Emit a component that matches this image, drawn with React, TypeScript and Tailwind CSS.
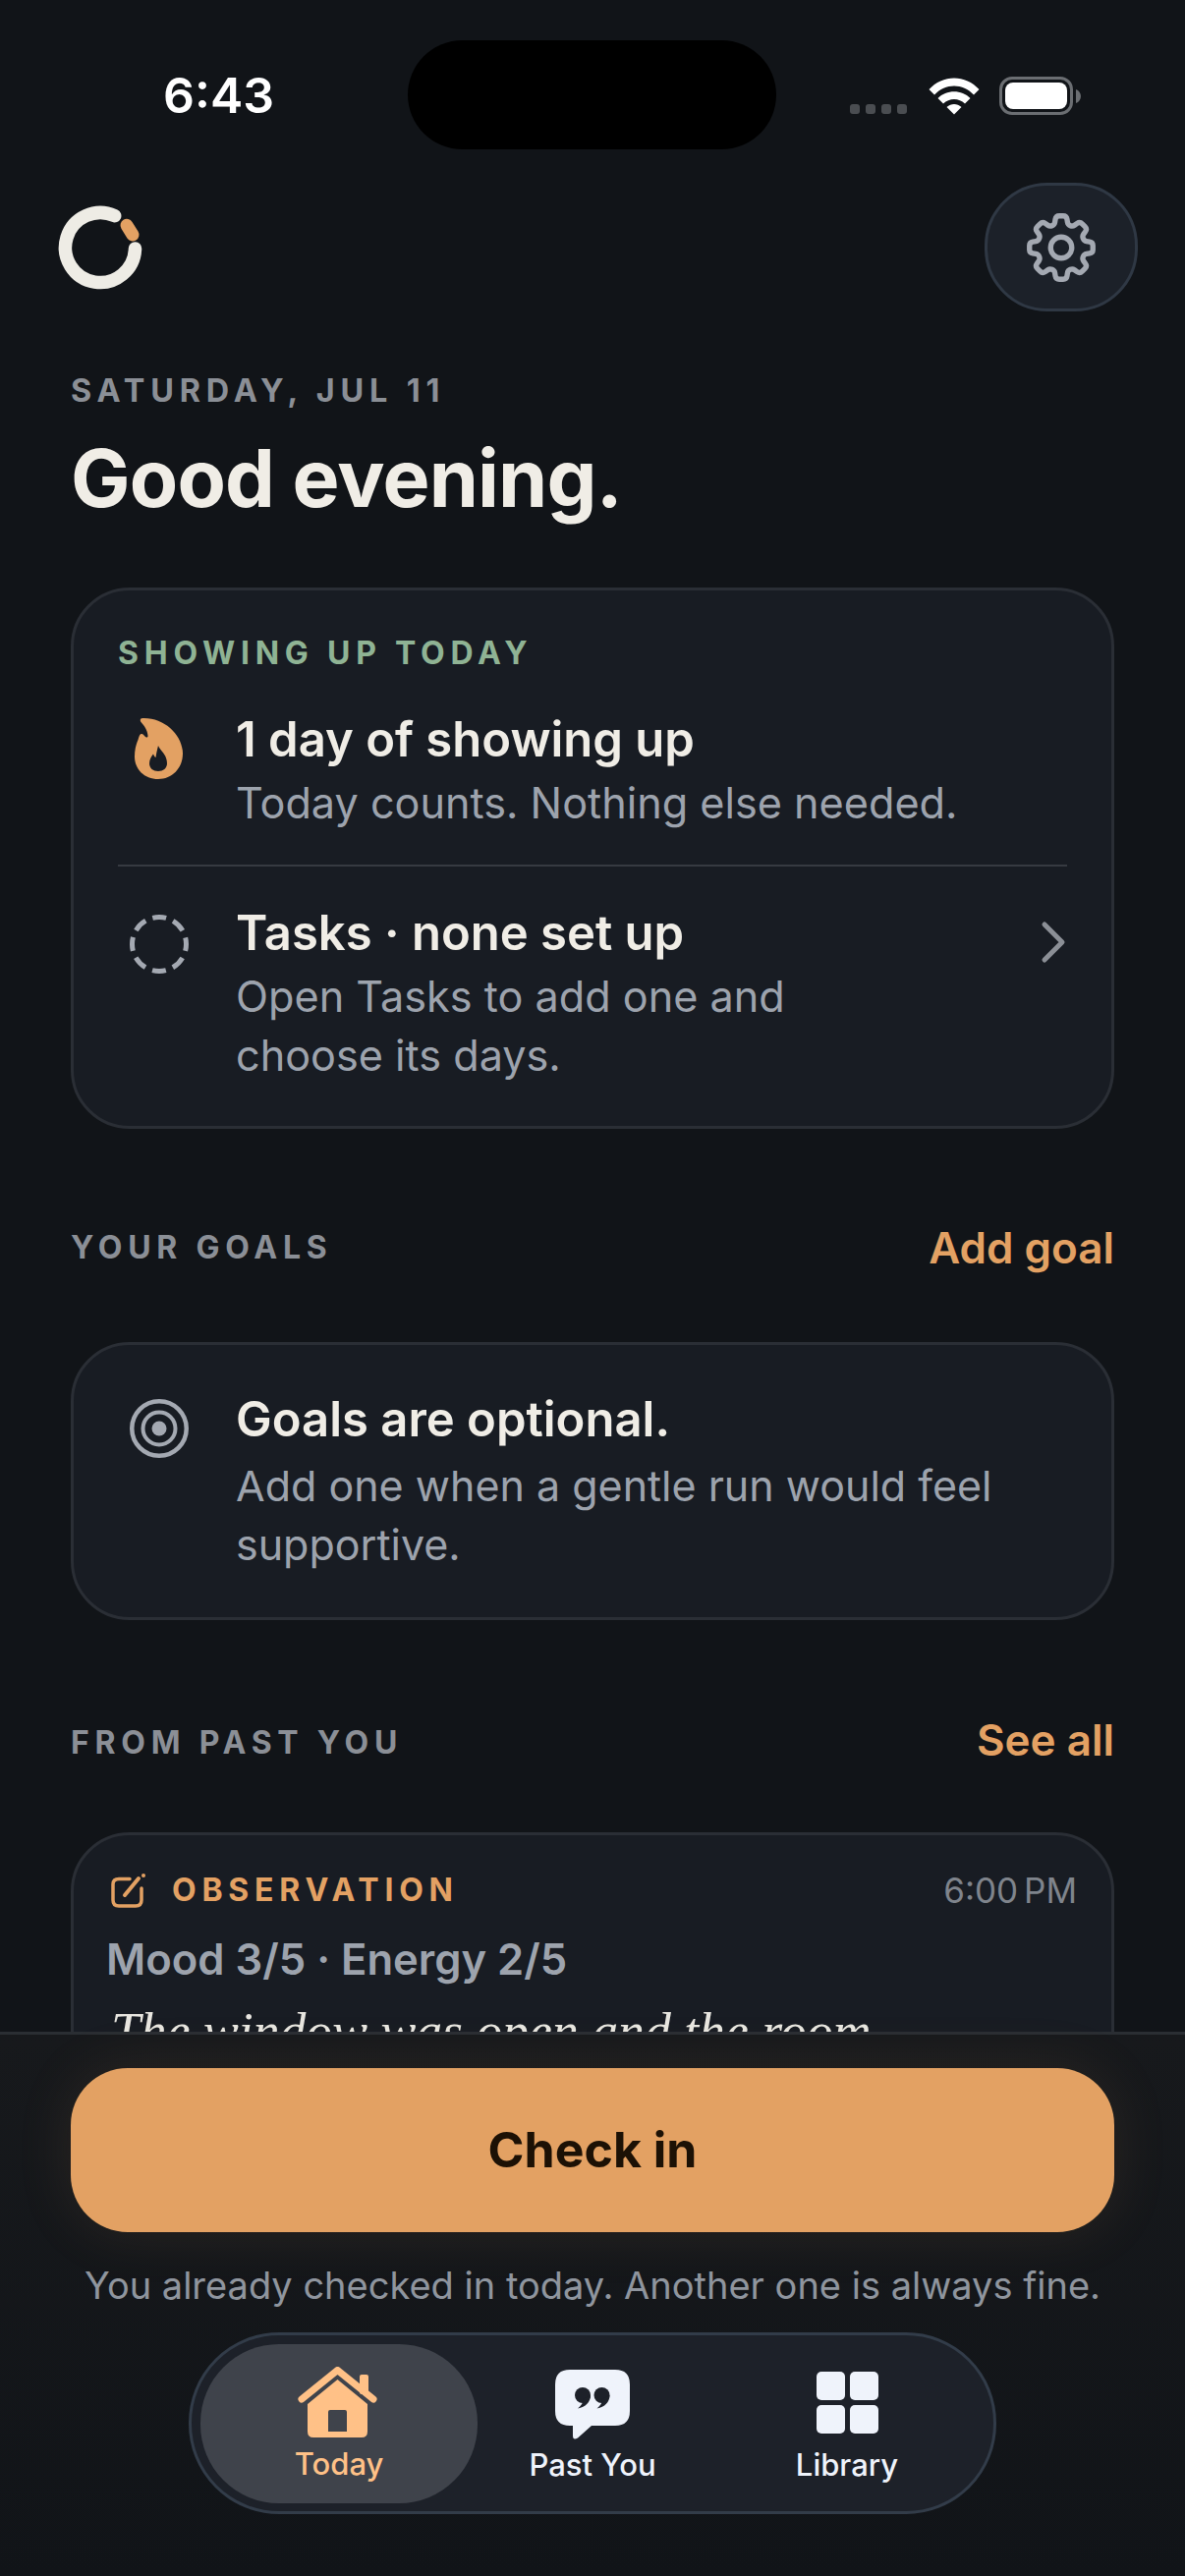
import React from "react";
import { HiOutlineCog8Tooth } from "react-icons/hi2";

const Sans = "font-['Inter','Liberation_Sans',sans-serif]";

function Logo() {
  return (
    <svg width="96" height="96" viewBox="0 0 96 96" fill="none">
      <path d="M62.7 15.7 A 35.5 35.5 0 1 0 83.5 49" stroke="#eeece5" strokeWidth="13.5" strokeLinecap="round" />
      <path d="M75 25.3 L81 35" stroke="#e3a163" strokeWidth="13" strokeLinecap="round" />
    </svg>
  );
}

function Wifi() {
  return (
    <svg width="52" height="38" viewBox="0 0 52 38" fill="white">
      <path d="M0.5 12 C 14 -3.5 38 -3.5 51.5 12 L 46 17.5 C 35 5.5 17 5.5 6 17.5 Z" />
      <path d="M9.5 21 C 18 12 34 12 42.5 21 L 37 26.5 C 31 20.5 21 20.5 15 26.5 Z" />
      <path d="M18.5 30 C 23 26 29 26 33.5 30 L 26 37.5 Z" />
    </svg>
  );
}

function Battery() {
  return (
    <div className="flex items-center gap-[3px]">
      <div className="w-[75px] h-[39px] rounded-[13px] border-[3px] border-[#6b6e72] p-[3px]">
        <div className="w-full h-full bg-white rounded-[8px]" />
      </div>
      <svg width="5" height="14" viewBox="0 0 5 14"><path d="M0 0 C 3 1 5 4 5 7 C 5 10 3 13 0 14 Z" fill="#6b6e72" /></svg>
    </div>
  );
}

function Flame() {
  return (
    <svg width="49" height="63" viewBox="0 0 49 63">
      <path
        fillRule="evenodd"
        fill="#e3a163"
        d="M8 1 C 6 1 5 3 6.5 5 C 10 9 13 13 13.5 19 C 13.5 21 11.5 21 10.5 19.5 C 9.5 18 8 16.5 6.5 17 C 5 17.5 4.5 20 3.5 23 C 1.5 28 0 33 0 40 C 0 53 10 63 24 63 C 38 63 49 52 49 37 C 49 18 30 0 8 1 Z M24 29 C 26 34 33 38 33 47 C 33 52 29 55 24 55 C 19 55 15 52 15 47 C 15 43 17 40 19 37.5 C 19.5 39 20.5 40.5 21.5 41 C 22 37 23 33 24 29 Z"
      />
    </svg>
  );
}

function Home() {
  return (
    <svg width="81" height="72" viewBox="0 0 81 72" fill="#ffc187">
      <rect x="63" y="8" width="9" height="20" rx="2" />
      <path d="M4 33 L40.5 3.5 L77 33" fill="none" stroke="#ffc187" strokeWidth="7" strokeLinecap="round" strokeLinejoin="round" />
      <path fillRule="evenodd" d="M40.5 13 L71 38 V66 Q71 72 65 72 H16 Q10 72 10 66 V38 Z M33 44 H48 Q50 44 50 46 V66 H31 V46 Q31 44 33 44 Z" />
    </svg>
  );
}

function Quote() {
  return (
    <svg width="76" height="71" viewBox="0 0 76 71">
      <path d="M15 0 L 61 0 Q 76 0 76 15 L 76 42 Q 76 57 61 57 L 37 57 L 23 69.5 Q 18 72.5 18 67 L 18 57 L 15 57 Q 0 57 0 42 L 0 15 Q 0 0 15 0 Z" fill="#eff3fb" />
      <circle cx="28" cy="26" r="8" fill="#1d2129" />
      <path d="M36 26 C 36 33 31 38 23 39.5 C 27 36 29 33 28 30 Z" fill="#1d2129" />
      <circle cx="47.5" cy="26" r="8" fill="#1d2129" />
      <path d="M55.5 26 C 55.5 33 50.5 38 42.5 39.5 C 46.5 36 48.5 33 47.5 30 Z" fill="#1d2129" />
    </svg>
  );
}

function Grid() {
  return (
    <div className="grid grid-cols-2 gap-[5px] w-[63px]">
      <div className="h-[29px] w-[29px] rounded-[5px] bg-[#eff3fb]" />
      <div className="h-[29px] w-[29px] rounded-[5px] bg-[#eff3fb]" />
      <div className="h-[29px] w-[29px] rounded-[5px] bg-[#eff3fb]" />
      <div className="h-[29px] w-[29px] rounded-[5px] bg-[#eff3fb]" />
    </div>
  );
}

export default function App() {
  return (
    <div className={`${Sans} w-[1206px] h-[2622px] bg-[#111418] flex flex-col overflow-hidden`}>
      <div className="flex-1 min-h-0 overflow-hidden">
        {/* status bar */}
        <div className="flex items-start pt-[41px] pl-[166px] pr-[106px] h-[152px]">
          <span className="w-[250px] mt-[28px] text-[50px] leading-[56px] font-semibold text-white">6:43</span>
          <div className="w-[376px] h-[111px] rounded-[56px] bg-black" />
          <div className="flex items-end ml-[75px] mt-[37px]">
            <div className="flex gap-[6px] mb-[1px]">
              <div className="w-[10px] h-[10px] rounded-[3px] bg-[#4a4d51]" />
              <div className="w-[10px] h-[10px] rounded-[3px] bg-[#4a4d51]" />
              <div className="w-[10px] h-[10px] rounded-[3px] bg-[#4a4d51]" />
              <div className="w-[10px] h-[10px] rounded-[3px] bg-[#4a4d51]" />
            </div>
            <div className="ml-[22px]"><Wifi /></div>
            <div className="ml-[20px]"><Battery /></div>
          </div>
        </div>

        {/* header */}
        <div className="flex items-center justify-between pl-[54px] pr-[48px] mt-[34px]">
          <Logo />
          <div className="w-[156px] h-[131px] rounded-[64px] bg-[#1c2129] border-[3px] border-[#2f3844] flex items-center justify-center">
            <HiOutlineCog8Tooth size={86} color="#a4a9b2" />
          </div>
        </div>

        <div className="px-[72px]">
          <div className="mt-[61px] text-[32.4px] leading-[40px] font-bold tracking-[0.18em] text-[#8b8f96]">SATURDAY, JUL 11</div>
          <h1 className="mt-[24px] text-[80.7px] leading-[90px] font-bold tracking-[-0.01em] text-[#f0ede6]">Good evening.</h1>

          {/* card 1 */}
          <div className="mt-[66px] rounded-[60px] bg-[#181c23] border-[3px] border-[#2a2e35] px-[45px] pt-[44px] pb-[42px]">
            <div className="text-[32px] leading-[40px] font-bold tracking-[0.18em] text-[#8fb394]">SHOWING UP TODAY</div>
            <div className="flex mt-[36px] pb-[33px] border-b-[2px] border-[#363a41]">
              <div className="w-[120px] pl-[17px] pt-[9px] shrink-0"><Flame /></div>
              <div>
                <div className="text-[49px] leading-[64px] font-semibold text-[#f0ede6]">1 day of showing up</div>
                <div className="text-[43.2px] leading-[60px] text-[#9da3ad] mt-[2px]">Today counts. Nothing else needed.</div>
              </div>
            </div>
            <div className="flex items-start pt-[36px]">
              <div className="w-[120px] pl-[12px] pt-[13px] shrink-0">
                <svg width="60" height="60" viewBox="0 0 60 60" fill="none">
                  <circle cx="30" cy="30" r="27.5" stroke="#a4a9b2" strokeWidth="5" strokeDasharray="14 7.6" strokeDashoffset="7" />
                </svg>
              </div>
              <div className="flex-1">
                <div className="text-[49px] leading-[64px] font-semibold text-[#f0ede6]">Tasks · none set up</div>
                <div className="text-[43.2px] leading-[60px] text-[#9da3ad] mt-[2px] w-[600px]">Open Tasks to add one and choose its days.</div>
              </div>
              <svg className="mt-[16px]" width="32" height="50" viewBox="0 0 32 50" fill="none">
                <path d="M9 7 L 27 25 L 9 43" stroke="#8b8f96" strokeWidth="5" strokeLinecap="round" strokeLinejoin="round" />
              </svg>
            </div>
          </div>

          <div className="flex items-center justify-between mt-[88px]">
            <span className="text-[32px] font-bold tracking-[0.18em] text-[#8b8f96]">YOUR GOALS</span>
            <span className="text-[44px] font-semibold text-[#e3a163]">Add goal</span>
          </div>

          {/* goals */}
          <div className="mt-[63px] rounded-[60px] bg-[#181c23] border-[3px] border-[#2a2e35] px-[45px] pt-[44px] pb-[44px] flex items-start">
            <div className="w-[120px] pl-[12px] pt-[11px] shrink-0">
              <svg width="60" height="60" viewBox="0 0 60 60" fill="none" stroke="#a4a9b2" strokeWidth="4.5">
                <circle cx="30" cy="30" r="27.75" />
                <circle cx="30" cy="30" r="16.5" strokeWidth="4" />
                <circle cx="30" cy="30" r="7.5" fill="#a4a9b2" stroke="none" />
              </svg>
            </div>
            <div>
              <div className="text-[49px] leading-[64px] font-semibold text-[#f0ede6]">Goals are optional.</div>
              <div className="text-[43px] leading-[60px] text-[#9da3ad] mt-[5px]">Add one when a gentle run would feel supportive.</div>
            </div>
          </div>

          <div className="flex items-center justify-between mt-[95px]">
            <span className="text-[32px] font-bold tracking-[0.18em] text-[#8b8f96]">FROM PAST YOU</span>
            <span className="-mt-[6px] text-[44px] font-semibold text-[#e3a163]">See all</span>
          </div>

          {/* past card */}
          <div className="mt-[61px] rounded-[60px] bg-[#181c23] border-[3px] border-[#2a2e35] px-[35px] pt-[36px] h-[400px]">
            <div className="flex items-center justify-between">
              <div className="flex items-center gap-[26px] pl-[3px]">
                <svg width="36" height="36" viewBox="0 0 36 36" fill="none" stroke="#e3a163" strokeWidth="3.5" strokeLinecap="round" strokeLinejoin="round">
                  <path d="M19 6.5 H 8 Q 2 6.5 2 12 V 28 Q 2 34 8 34 H 25 Q 31 34 31 28 V 16" />
                  <path d="M14 23 L 28 6" strokeWidth="4" />
                  <circle cx="33" cy="3" r="2" fill="#e3a163" stroke="none" />
                </svg>
                <span className="text-[32px] leading-[40px] font-bold tracking-[0.18em] text-[#e3a163]">OBSERVATION</span>
              </div>
              <span className="text-[35px] leading-[40px] text-[#7f848c] [word-spacing:-4px]">6:00 PM</span>
            </div>
            <div className="mt-[21px] -ml-[2px] text-[43.6px] leading-[60px] font-semibold text-[#9da3ad]">Mood 3/5 · Energy 2/5</div>
            <div className="mt-[10px] pl-[3px] font-['Liberation_Serif',serif] italic text-[53.7px] leading-[64px] text-[#e8e6e0]">The window was open and the room</div>
          </div>
        </div>
      </div>

      {/* bottom */}
      <div className="h-[554px] shrink-0 border-t-[3px] border-[#2a2e33] bg-gradient-to-b from-[#17191c] to-[#111418] flex flex-col items-center">
        <div className="mt-[34px] w-[1062px] h-[167px] rounded-[58px] bg-[#e3a163] shadow-[0_0_60px_rgba(227,161,99,0.10)] flex items-center justify-center">
          <span className="text-[50px] font-bold text-[#1c1105]">Check in</span>
        </div>
        <div className="mt-[29px] text-[38px] leading-[50px] text-[#8f959e]">You already checked in today. Another one is always fine.</div>
        <div className="mt-[23px] w-[822px] h-[185px] rounded-[92px] bg-[#1d2129] border-[3px] border-[#323c49] flex items-center px-[9px]">
          <div className="w-[282px] -mr-[12px] h-[162px] rounded-[80px] bg-[#3f434b] flex flex-col items-center justify-center pt-[4px]">
            <div className="pr-[3px]"><Home /></div>
            <span className="mt-[7px] text-[31px] leading-[40px] font-medium text-[#ffc187]">Today</span>
          </div>
          <div className="w-[258px] flex flex-col items-center pt-[8px]">
            <Quote />
            <span className="mt-[6px] text-[31px] leading-[40px] font-medium text-[#eff3fb]">Past You</span>
          </div>
          <div className="w-[258px] flex flex-col items-center pt-[8px] pl-[2px]">
            <div className="h-[71px] pt-[2px]"><Grid /></div>
            <span className="mt-[6px] text-[31px] leading-[40px] font-medium text-[#eff3fb]">Library</span>
          </div>
        </div>
      </div>
    </div>
  );
}
